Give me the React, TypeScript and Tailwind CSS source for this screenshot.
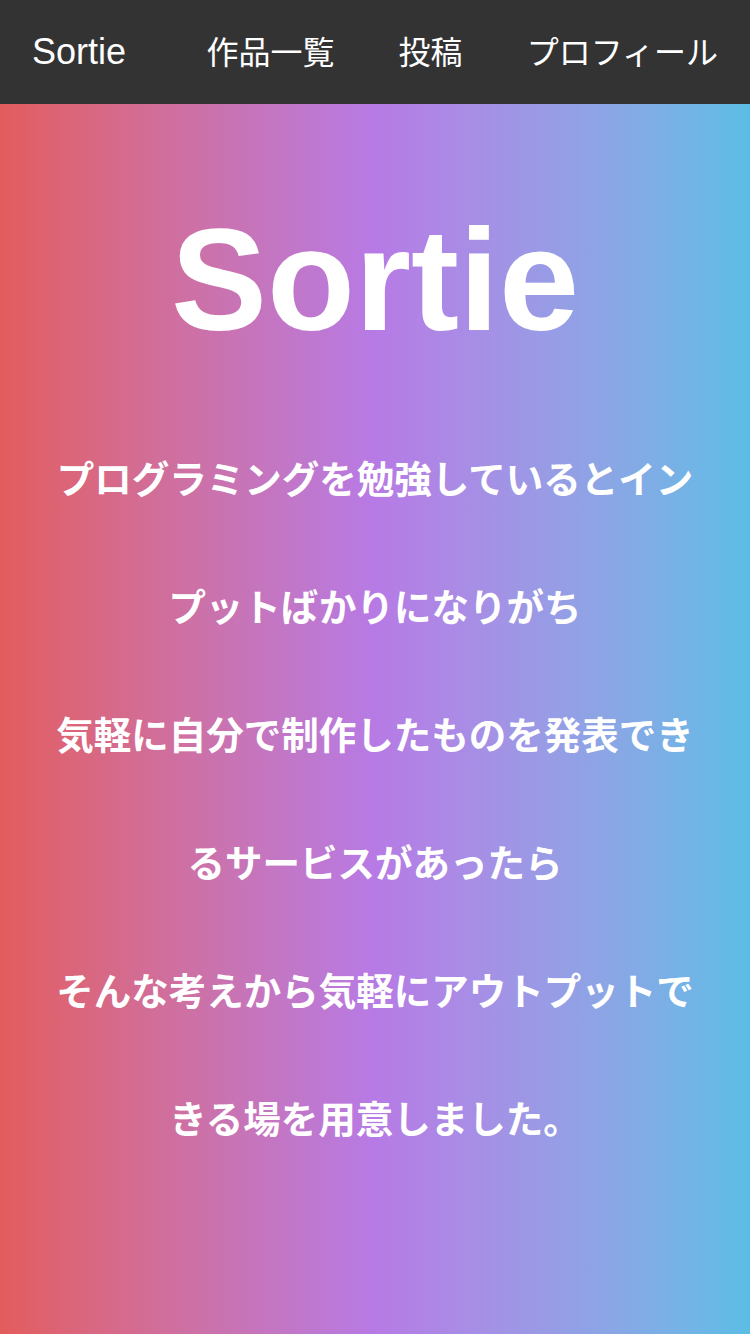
const navItems = ['作品一覧', '投稿', 'プロフィール'];

const paragraphs = [
  'プログラミングを勉強しているとインプットばかりになりがち',
  '気軽に自分で制作したものを発表できるサービスがあったら',
  'そんな考えから気軽にアウトプットできる場を用意しました。',
];

const Header = () => (
  <header className="flex h-[104px] items-center justify-between bg-[#333333] px-8 text-white">
    <div className="font-['Liberation_Sans','Noto_Sans_CJK_JP',sans-serif] text-[36px] leading-none">
      Sortie
    </div>
    <nav className="flex gap-16 pb-1 text-[32px] font-['Noto_Sans_CJK_JP',sans-serif]">
      {navItems.map((item) => (
        <a key={item} href="#" className="leading-none">
          {item}
        </a>
      ))}
    </nav>
  </header>
);

const App = () => {
  return (
    <div className="min-h-[1334px] bg-gradient-to-r from-[#e35c5c] via-[#b77ae5] to-[#5abde5]">
      <Header />
      <main className="flex flex-col items-center pt-[105px] text-white">
        <h1 className="font-['Liberation_Sans',sans-serif] text-[144px] font-bold leading-none">
          Sortie
        </h1>
        <div className="mt-[60px] w-[660px] text-center font-['Noto_Sans_CJK_JP',sans-serif] text-[37.5px] font-bold leading-[128px]">
          {paragraphs.map((text) => (
            <p key={text}>{text}</p>
          ))}
        </div>
      </main>
    </div>
  );
};

export default App;
